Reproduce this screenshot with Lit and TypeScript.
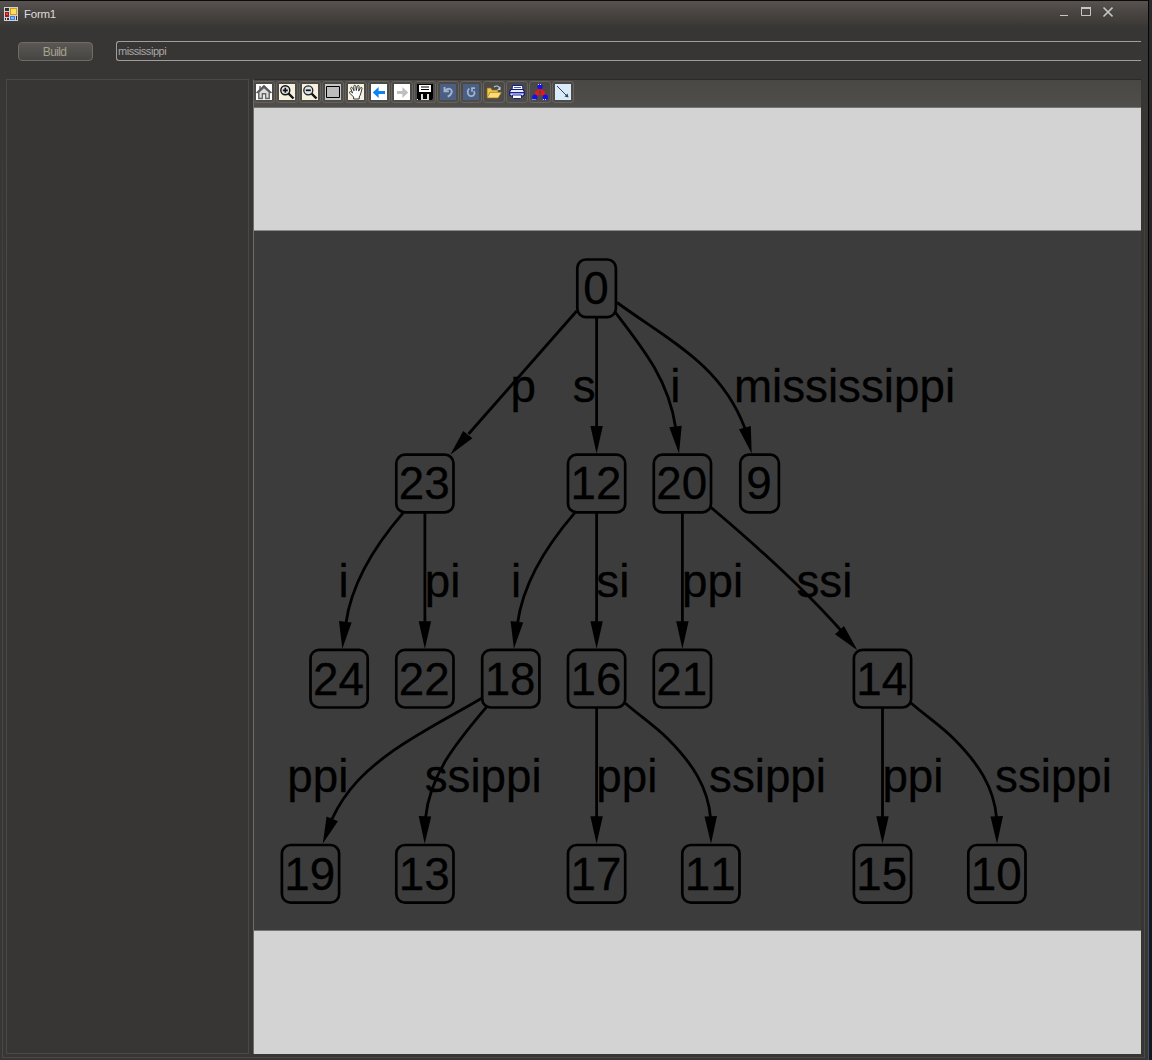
import { LitElement, html, svg, css } from "lit";
import { customElement } from "lit/decorators.js";

type TreeNode = [label: string, cx: number, cy: number];
type EdgeLabel = [text: string, x: number, y: number];
type Edge = [path: string, arrow: string];

const down = (x: number, y1: number, y2: number): Edge => [
  `M${x},${y1}V${y2 - 25}`,
  `${x - 6.2},${y2 - 27.5} ${x + 6.2},${y2 - 27.5} ${x},${y2}`,
];

const NODES: TreeNode[] = [
  ["0", 596.6, 288.3],
  ["23", 424.9, 483.5], ["12", 596.6, 483.5], ["20", 682.4, 483.5], ["9", 759.6, 483.5],
  ["24", 339.1, 678.7], ["22", 424.9, 678.7], ["18", 510.8, 678.7], ["16", 596.6, 678.7],
  ["21", 682.4, 678.7], ["14", 882.5, 678.7],
  ["19", 310.5, 873.8], ["13", 424.9, 873.8], ["17", 596.6, 873.8], ["11", 710.9, 873.8],
  ["15", 882.5, 873.8], ["10", 996.9, 873.8],
];

const LABELS: EdgeLabel[] = [
  ["p", 510.6, 402], ["s", 572.8, 402], ["i", 670.3, 402], ["mississippi", 733.9, 402],
  ["i", 338.4, 597.2], ["pi", 424.7, 597.2], ["i", 511, 597.2], ["si", 596.3, 597.2],
  ["ppi", 682, 597.2], ["ssi", 796.4, 597.2],
  ["ppi", 287.3, 792.4], ["ssippi", 424.7, 792.4], ["ppi", 596.3, 792.4], ["ssippi", 709, 792.4],
  ["ppi", 882.4, 792.4], ["ssippi", 995, 792.4],
];

const EDGES: Edge[] = [
  ["M576.7,311L468.5,434", "463.2,431 472.4,438.2 450.3,454.8"],
  down(596.6, 318, 453.5),
  ["M615.3,312.3C646,352 669,382 675.7,428", "669.3,427.3 681.7,425.8 679,453.5"],
  ["M617,302.5C668,340 721,364 745,428.5", "739,429.3 750.8,426 751.7,453.5"],
  ["M403.3,512.7C372,549 351,587 346,623", "339,621 351.6,622.5 342.3,648.7"],
  down(424.9, 513, 648.7),
  ["M574.9,512.7C543.6,549 522.6,587 517.6,623", "510.6,621 523.2,622.5 513.9,648.7"],
  down(596.6, 513, 648.7),
  down(682.4, 513, 648.7),
  ["M711,507.5C752,542 803,588 841,630.5", "835,634.2 844,626 857.4,650.2"],
  ["M481.7,698.3C455,714 420,732 393.3,750.7C366,770 346,789 332,819", "326.6,816.4 337.9,821.2 322.8,843.6"],
  ["M486.2,707.3C455,744 430,775 425.5,818", "418.7,816 431.2,816.6 424.7,843.8"],
  down(596.6, 708, 843.8),
  ["M625,703C640,716 655,726 668,739C692,763 708,787 710.6,818", "704.5,816.6 717,816 711,843.8"],
  down(882.5, 708, 843.8),
  ["M911,703C926,716 941,726 954,739C978,763 994,787 996.6,818", "990.5,816.6 1003,816 997,843.8"],
];

const TOOLS = [
  // home
  svg`<path fill="#fff" d="M0 0h16v16H0z"/><path fill="#8c8c8c" d="M3 2h2v4H3z"/><path d="M2.8 8v6.4h3.6v-4.6h3.2v4.6h3.6V8L8 3.5z" fill="#ddd" stroke="#666" stroke-width="1.5"/><path d="M.6 9 8 2l7.4 7" fill="none" stroke="#555" stroke-width="1.7"/>`,
  // zoom in
  svg`<path fill="#f6f0df" d="M0 0h16v16H0z"/><path d="m9.5 9.5 5 5" stroke="#111" stroke-width="2.4"/><circle cx="6.3" cy="6.3" r="4.5" fill="#dce3ea" stroke="#111" stroke-width="1.4"/><path d="M3.8 6.3h5M6.3 3.8v5" stroke="#111" stroke-width="1.7"/>`,
  // zoom out
  svg`<path fill="#f6f0df" d="M0 0h16v16H0z"/><path d="m9.5 9.5 5 5" stroke="#111" stroke-width="2.4"/><circle cx="6.3" cy="6.3" r="4.5" fill="#dce3ea" stroke="#222" stroke-width="1.3"/><path d="M3.8 6.3h5" stroke="#111" stroke-width="1.7"/>`,
  // window zoom
  svg`<path fill="#c6c6c6" d="M0 0h16v16H0z"/><path d="M1.5 2.5h13v11h-13z" fill="#bdbdbd" stroke="#000"/>`,
  // pan
  svg`<path fill="#f6f0df" d="M0 0h16v16H0z"/><path d="M5.6 15v-2L2 9.4C.8 8 2.2 7 3.4 8l1.2 1L2.7 4.5c-.4-1.3 1.2-1.800 1.800-.6L6 6.800 5.800 2.300c0-1.400 1.800-1.400 2 0L8.300 6.500l1-4.300c.4-1.200 2-.8 1.800.5l-.4 4.400 1.700-3.200c.7-1 2-.3 1.600.8L12.600 10c-.4 1.300-.8 2-1.400 3v2z" fill="#fff" stroke="#222" stroke-width=".9"/>`,
  // back
  svg`<path fill="#fff" d="M0 0h16v16H0z"/><path fill="#0a84f5" d="M1.8 8.500 7.600 3V7H14v3.100H7.600V14z"/>`,
  // forward
  svg`<path fill="#fff" d="M0 0h16v16H0z"/><path fill="#bfbfbf" d="M14.200 8.500 8.400 3V7H3v3.100h5.400V14z"/>`,
  // save
  svg`<path d="M0 0h16v14l-1 2H1l-1-1z"/><path fill="#fff" d="M2 1h12v7H2z"/><path d="M4 2.500h8v1H4zM4 5h8v1H4z"/><path fill="#ddd" d="M4 10h2v5h4v-5h2v6H4z"/><path fill="#fff" d="M0 15h1v1H0z"/>`,
  // undo
  svg`<path fill="#4b5f83" d="M0 0h16v16H0z"/><path d="M4.500 3v4.400h4.400M4.800 7.200C7.600 3 12.800 4.500 11.600 8.700c-.5 1.800-1.700 2.900-3.900 3.900" fill="none" stroke="#a3b4d2" stroke-width="1.900"/>`,
  // redo
  svg`<path fill="#4b5f83" d="M0 0h16v16H0z"/><path d="M12 4.200H9v3.600M6.300 4.500C3.400 7.200 4.800 12.200 8.300 12.200c3 0 4-3 2.500-5.200" fill="none" stroke="#a3b4d2" stroke-width="1.700"/>`,
  // open
  svg`<path fill="#f2c94f" stroke="#8a6414" stroke-width=".7" d="M1 14V4h4l1 2h6v3"/><path fill="#ffdc78" stroke="#9a7017" stroke-width=".7" d="M1 14 4 8.300h11.500L12.200 14z"/><path d="M8 3.200c2-2 4.500-1.400 5.600.8" fill="none" stroke="#b8d0ea" stroke-width="1.200"/><path fill="#b8d0ea" d="M14.500 2.500V6H11z"/>`,
  // print
  svg`<path fill="#fff" stroke="#16208a" d="M3.500 1.500h10l.5 4H3z"/><path d="M5 3.500h7" stroke="#4058c8"/><path fill="#e8ecff" stroke="#101878" stroke-width="1.200" d="M2 5.500h12l1.300 2v3.200l-1.300 1.300H2L.7 10.700V7.500z"/><path fill="#18229a" d="M1 8h14v1.400H1z"/><path fill="#fff" stroke="#16208a" d="M3.500 11h9v3l-1 .5h-7l-1-.5z"/>`,
  // layout
  svg`<path stroke="#f01414" stroke-width="2" fill="none" d="m7.500 4-4 8m5-8 4 8M4.500 7l-.5 3.800 3.500-1M11.500 7l.8 3.800-3.800-1"/><g fill="#1010f0"><circle cx="8" cy="2.700" r="2.600"/><circle cx="2.800" cy="13.200" r="2.600"/><circle cx="13.300" cy="13.200" r="2.600"/></g><path stroke="#ddd" stroke-width="1" stroke-dasharray="1 1" d="M6 .5h4M.5 15.500h4M11 15.500h4"/>`,
  // edge insertion
  svg`<path fill="#d9eafb" d="M0 0h16v16H0z"/><path d="m2 2 11 11" stroke="#37424f" stroke-width="1"/><path fill="#37424f" d="M13.500 13.500 9.500 12.500l3-3z"/>`,
];

@customElement("tool-strip")
export class ToolStrip extends LitElement {
  static styles = css`
    :host { display: flex; height: 27px; box-sizing: border-box; background: linear-gradient(#4a4845, #504e4b); }
    .tool { box-sizing: border-box; width: 23px; height: 23px; display: flex; align-items: center; justify-content: center; padding-right: 3px; }
    .face { flex: none; display: flex; padding: 2px; border: 1px solid #66635f; border-radius: 3px; }
    .glyph { width: 16px; height: 16px; display: block; overflow: visible; }
  `;
  render() {
    return TOOLS.map(
      (t) => html`<div class="tool"><span class="face"><svg class="glyph" viewBox="0 0 16 16">${t}</svg></span></div>`
    );
  }
}

@customElement("graph-view")
export class GraphView extends LitElement {
  static styles = css`
    :host { display: block; }
    .canvas { display: block; width: 887px; height: 699px; background: #3c3c3c; }
    .edge { fill: none; stroke: #000; stroke-width: 2.8; }
    .box { fill: none; stroke: #000; stroke-width: 2.7; }
    .text { font: 45.76px "Liberation Sans", Arial, sans-serif; font-kerning: none; fill: #000; stroke: #000; stroke-width: 0.3; }
  `;
  render() {
    return html`<svg class="canvas" viewBox="254 231 887 699">
      ${EDGES.map(([d, a]) => svg`<path class="edge" d=${d} /><polygon points=${a} />`)}
      ${NODES.map(([label, cx, cy]) => {
        const w = label.length > 1 ? 57.2 : 38.6;
        return svg`<rect class="box" x=${cx - w / 2} y=${cy - 28.8} width=${w} height="57.6" rx="8.6" />
          <text class="text" x=${cx - 0.7 - label.length * 12.72} y=${cy + 15.8}>${label}</text>`;
      })}
      ${LABELS.map(([t, x, y]) => svg`<text class="text" x=${x} y=${y}>${t}</text>`)}
    </svg>`;
  }
}

@customElement("app-root")
export class AppRoot extends LitElement {
  static styles = css`
    :host { display: block; }
    .screen { display: flex; width: 1152px; height: 1060px; overflow: hidden; background: #1d1d1f; font-family: "Liberation Sans", Arial, sans-serif; }
    .window { box-sizing: border-box; width: 1148px; height: 1060px; display: flex; flex-direction: column; border-top: 1px solid #0c0b0b; background: #383634; }
    .edge-line { width: 1px; background: linear-gradient(#050505 60%, #35577b 75%, #35577b); }
    .outside { width: 3px; background: linear-gradient(#2c2b2b, #232324 30%, #17181c 72%, #17181c); }
    .title { box-sizing: border-box; height: 27px; flex: none; display: flex; align-items: center; padding: 0 35px 2px 4px; background: linear-gradient(#585350, #484441 45%, #383634); }
    .logo { width: 14px; height: 14px; }
    .name { flex: 1; margin-left: 6px; font-size: 11.5px; color: #dcdcdc; letter-spacing: -0.25px; }
    .controls { width: 54px; height: 12px; margin-bottom: 3px; }
    .row { height: 51px; flex: none; display: flex; align-items: flex-start; padding: 12px 7px 0 18px; box-sizing: border-box; }
    .build { box-sizing: border-box; width: 75px; height: 19px; margin: 2px 23px 0 0; padding: 1px 2px 0 0; border: 1px solid #6f6c68; border-radius: 4px; background: linear-gradient(#5a5754, #474542); color: #a3a390; font: 12px/16px "Liberation Sans", Arial, sans-serif; letter-spacing: -0.65px; }
    .field { box-sizing: border-box; flex: 1; height: 20px; margin-top: 1px; padding: 0 1px; border: 1px solid #a09e9a; border-right: 0; border-radius: 3px 0 0 3px; font-size: 11px; line-height: 18px; color: #a8a8a6; letter-spacing: -0.45px; }
    .body { flex: 1; min-height: 0; display: flex; gap: 4px; margin: 0 3px 2px 2px; padding: 0 3px 3px 3px; border: 1px solid; border-top: 0; border-image: linear-gradient(#383634, #4b4947 30%) 1; }
    .side { box-sizing: border-box; flex: none; width: 243px; border: 1px solid #4b4947; }
    .viewer { flex: 1; display: flex; flex-direction: column; border-left: 1px solid #6d6c6a; border-top: 1px solid #2b2a29; }
    .pad { background: #d3d3d3; flex: none; height: 122px; border-top: 1px solid #767574; border-bottom: 1px solid #8a8a8a; }
    .pad-end { flex: 1; height: auto; border-bottom: 0; }
  `;
  render() {
    return html`<div class="screen">
      <div class="window">
        <div class="title">
          <svg class="logo" viewBox="0 0 14 14" shape-rendering="crispEdges">
            <path fill="#d0d3d6" d="M0 0h14v14H0z" /><path fill="#2b2f36" d="M1 1h4v3H1zM1 11h1v2H1zM3 11h2v2H3zM12 9h1v4h-1z" />
            <path fill="#a31616" d="M1 5h4v5H1z" /><path fill="#e04a3a" d="M2 6h2v2H2z" />
            <path fill="#d89a10" d="M6 1h7v7H6z" /><path fill="#ffdf5e" d="M7 2h5v5H7z" />
            <path fill="#3f7ee0" d="M6 9h5v4H6z" /><path fill="#8ab8f8" d="M7 10h3v2H7z" />
          </svg>
          <span class="name">Form1</span>
          <svg class="controls" viewBox="0 0 54 12" fill="none" stroke="#c6c6c4">
            <path d="M1 9.5h8" /><path d="M22.5 2v7.500h9V2z" /><path d="M22 2h10" stroke-width="2" />
            <path d="m44.500 1.500 9 9m0-9-9 9" stroke-width="1.600" />
          </svg>
        </div>
        <div class="row">
          <button class="build">Build</button>
          <div class="field">mississippi</div>
        </div>
        <div class="body">
          <div class="side"></div>
          <div class="viewer">
            <tool-strip></tool-strip>
            <div class="pad"></div>
            <graph-view></graph-view>
            <div class="pad pad-end"></div>
          </div>
        </div>
      </div>
      <div class="edge-line"></div>
      <div class="outside"></div>
    </div>`;
  }
}
